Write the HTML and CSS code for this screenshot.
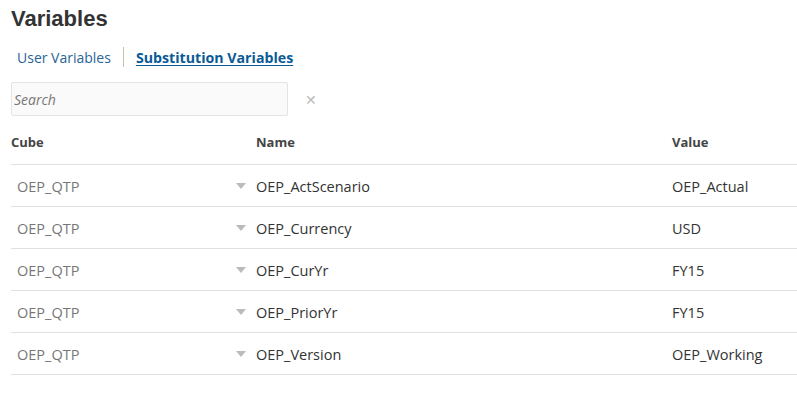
FILE: index.html
```html
<!DOCTYPE html>
<html lang="en">
<head>
    <meta charset="UTF-8">
    <title>Variables</title>
    <link rel="stylesheet" href="styles.css">
</head>
<body>
    <h1 class="title">Variables</h1>

    <div class="tabs">
        <a class="tab">User Variables</a>
        <span class="tab-sep"></span>
        <a class="tab tab-active">Substitution Variables</a>
    </div>

    <div class="search">
        <input class="search-input" type="text" placeholder="Search">
        <span class="search-clear">&#x2715;</span>
    </div>

    <div class="grid">
        <div class="row row-head">
            <div class="cell">Cube</div>
            <div class="cell"></div>
            <div class="cell">Name</div>
            <div class="cell">Value</div>
        </div>
        <div class="row">
            <div class="cell cube">OEP_QTP</div>
            <div class="cell caret"></div>
            <div class="cell">OEP_ActScenario</div>
            <div class="cell">OEP_Actual</div>
        </div>
        <div class="row">
            <div class="cell cube">OEP_QTP</div>
            <div class="cell caret"></div>
            <div class="cell">OEP_Currency</div>
            <div class="cell">USD</div>
        </div>
        <div class="row">
            <div class="cell cube">OEP_QTP</div>
            <div class="cell caret"></div>
            <div class="cell">OEP_CurYr</div>
            <div class="cell">FY15</div>
        </div>
        <div class="row">
            <div class="cell cube">OEP_QTP</div>
            <div class="cell caret"></div>
            <div class="cell">OEP_PriorYr</div>
            <div class="cell">FY15</div>
        </div>
        <div class="row">
            <div class="cell cube">OEP_QTP</div>
            <div class="cell caret"></div>
            <div class="cell">OEP_Version</div>
            <div class="cell">OEP_Working</div>
        </div>
    </div>
</body>
</html>
```

FILE: styles.css
```css
body {
    margin: 0;
    padding: 0 0 0 11px;
    font-family: "Open Sans", "Noto Sans", sans-serif;
    font-size: 14px;
    color: #333;
    background: #fff;
}

.title {
    font-family: "Liberation Sans", Arial, sans-serif;
    font-size: 22px;
    font-weight: bold;
    color: #333;
    margin: 0;
    padding-top: 7px;
    line-height: 24px;
}

/* abas */
.tabs {
    display: flex;
    align-items: center;
    margin-top: 16px;
    height: 20px;
    padding-left: 6px;
}

.tab {
    color: #2a6496;
    font-size: 14px;
}

.tab-sep {
    width: 1px;
    height: 20px;
    background: #c8c2a8;
    margin: 0 12px;
}

.tab-active {
    color: #0a5a96;
    font-weight: bold;
    font-size: 14.2px;
    text-decoration: underline;
    text-underline-offset: 2px;
}

/* busca */
.search {
    display: flex;
    align-items: center;
    margin-top: 15px;
}

.search-input {
    width: 277px;
    height: 34px;
    box-sizing: border-box;
    border: 1px solid #e4e4e4;
    border-radius: 2px;
    background: #fafafa;
    padding: 0 2px;
    font-family: inherit;
    font-size: 14px;
}

.search-input::placeholder {
    color: #777;
    font-style: italic;
}

.search-clear {
    color: #bbb;
    font-size: 14px;
    margin-left: 17px;
}

/* tabela */
.grid {
    margin-top: 3px;
}

.row {
    display: grid;
    grid-template-columns: 222px 23px 416px 1fr;
    align-items: center;
    height: 41px;
    font-size: 14.5px;
    border-bottom: 1px solid #e0e0e0;
}

.row > .cell {
    padding-top: 2px;
}

.row-head {
    height: 45px;
    font-size: 13px;
    font-weight: bold;
    color: #444;
}

.row-head > .cell {
    padding-top: 0;
}

.cube {
    color: #777;
    padding-left: 6px;
}

.row > .caret {
    width: 0;
    height: 0;
    padding: 0;
    border-left: 5px solid transparent;
    border-right: 5px solid transparent;
    border-top: 6px solid #bbb;
    justify-self: start;
    margin-left: 3px;
}
```
